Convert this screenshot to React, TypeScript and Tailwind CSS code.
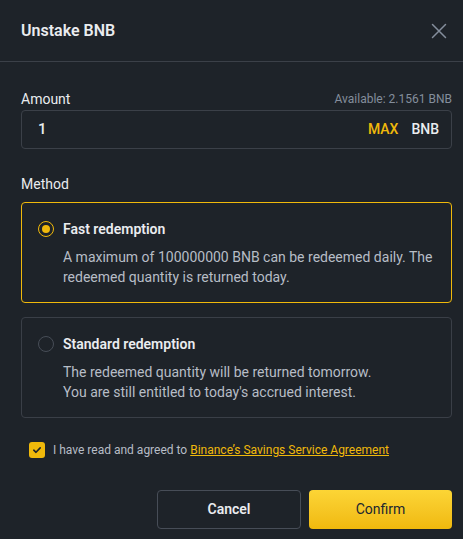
import React, { useState } from "react";

type Method = "fast" | "standard";

const Radio = ({ checked }: { checked: boolean }) => (
  <span
    className={`flex h-[16px] w-[16px] shrink-0 items-center justify-center rounded-full border-[1.5px] ${
      checked ? "border-[#f0b90b]" : "border-[#474d57]"
    }`}
  >
    {checked && <span className="h-[8px] w-[8px] rounded-full bg-[#f0b90b]" />}
  </span>
);

const MethodCard = ({
  title,
  lines,
  selected,
  onClick,
}: {
  title: string;
  lines: string[];
  selected: boolean;
  onClick: () => void;
}) => (
  <div
    onClick={onClick}
    className={`cursor-pointer rounded-[4px] border px-[16px] pt-[16px] pb-[15px] ${
      selected ? "border-[#f0b90b]" : "border-[#3a3f47]"
    }`}
  >
    <div className="flex h-[20px] items-center gap-[9px]">
      <Radio checked={selected} />
      <span className="text-[14px] font-semibold text-[#eaecef]">{title}</span>
    </div>
    <div className="mt-[8px] whitespace-nowrap pl-[25px] text-[14px] leading-[20px] text-[#b7bdc6]">
      {lines.map((l) => (
        <div key={l}>{l}</div>
      ))}
    </div>
  </div>
);

const App = () => {
  const [method, setMethod] = useState<Method>("fast");
  const [agreed, setAgreed] = useState(true);
  const [amount, setAmount] = useState("1");

  return (
    <div
      className="h-[539px] w-[463px] overflow-hidden bg-[#1e2329] text-[#eaecef]"
      style={{ fontFamily: "Roboto, 'Noto Sans', sans-serif" }}
    >
      {/* header */}
      <div className="flex h-[62px] items-center justify-between border-b border-[#3b4048] pl-[21px] pr-[16px]">
        <h2 className="text-[16px] font-semibold text-[#eaecef]">Unstake BNB</h2>
        <button className="text-[#848e9c]">
          <svg width="16" height="16" viewBox="0 0 16 16" fill="none">
            <path d="M1.5 1.5l13 13M14.5 1.5l-13 13" stroke="currentColor" strokeWidth="1.5" strokeLinecap="round" />
          </svg>
        </button>
      </div>

      <div className="pl-[21px] pr-[11px]">
        {/* amount */}
        <div className="mt-[27px] flex h-[20px] items-center justify-between">
          <span className="text-[14px] text-[#eaecef]">Amount</span>
          <span className="text-[12px] text-[#848e9c]">Available: 2.1561 BNB</span>
        </div>
        <div className="mt-[1px] flex h-[39px] items-center rounded-[4px] border border-[#3b4048] pl-[16px] pr-[12px]">
          <input
            value={amount}
            onChange={(e) => setAmount(e.target.value)}
            className="min-w-0 flex-1 bg-transparent text-[15px] font-medium text-[#eaecef] outline-none"
          />
          <button className="text-[14px] font-medium text-[#f0b90b]">MAX</button>
          <span className="ml-[13px] text-[14px] font-medium text-[#eaecef]">BNB</span>
        </div>

        {/* method */}
        <div className="mt-[25px] h-[20px] text-[14px] leading-[20px] text-[#eaecef]">Method</div>
        <div className="mt-[8px] flex flex-col gap-[14px]">
          <MethodCard
            title="Fast redemption"
            lines={["A maximum of 100000000 BNB can be redeemed daily. The", "redeemed quantity is returned today."]}
            selected={method === "fast"}
            onClick={() => setMethod("fast")}
          />
          <MethodCard
            title="Standard redemption"
            lines={["The redeemed quantity will be returned tomorrow.", "You are still entitled to today's accrued interest."]}
            selected={method === "standard"}
            onClick={() => setMethod("standard")}
          />
        </div>

        {/* agreement */}
        <div className="ml-[8px] mt-[24px] flex h-[16px] items-center gap-[8px]">
          <button
            onClick={() => setAgreed(!agreed)}
            className={`flex h-[16px] w-[16px] items-center justify-center rounded-[3px] ${
              agreed ? "bg-[#f0b90b]" : "border border-[#474d57]"
            }`}
          >
            {agreed && (
              <svg width="10" height="10" viewBox="0 0 10 10" fill="none">
                <path d="M1.8 5.2l2.2 2.1 4.2-4.4" stroke="#1e2329" strokeWidth="1.6" strokeLinecap="round" strokeLinejoin="round" />
              </svg>
            )}
          </button>
          <span className="text-[12px] text-[#b7bdc6]">
            I have read and agreed to{" "}
            <a className="text-[#f0b90b] underline">Binance’s Savings Service Agreement</a>
          </span>
        </div>

        {/* actions */}
        <div className="mt-[32px] flex justify-end gap-[8px]">
          <button className="h-[39px] w-[144px] rounded-[4px] border border-[#474d57] text-[14px] font-semibold text-[#eaecef]">
            Cancel
          </button>
          <button className="h-[39px] w-[143px] rounded-[4px] bg-gradient-to-b from-[#fcd535] to-[#f0b90b] text-[14px] font-normal text-[#202630]">
            Confirm
          </button>
        </div>
      </div>
    </div>
  );
};

export default App;
